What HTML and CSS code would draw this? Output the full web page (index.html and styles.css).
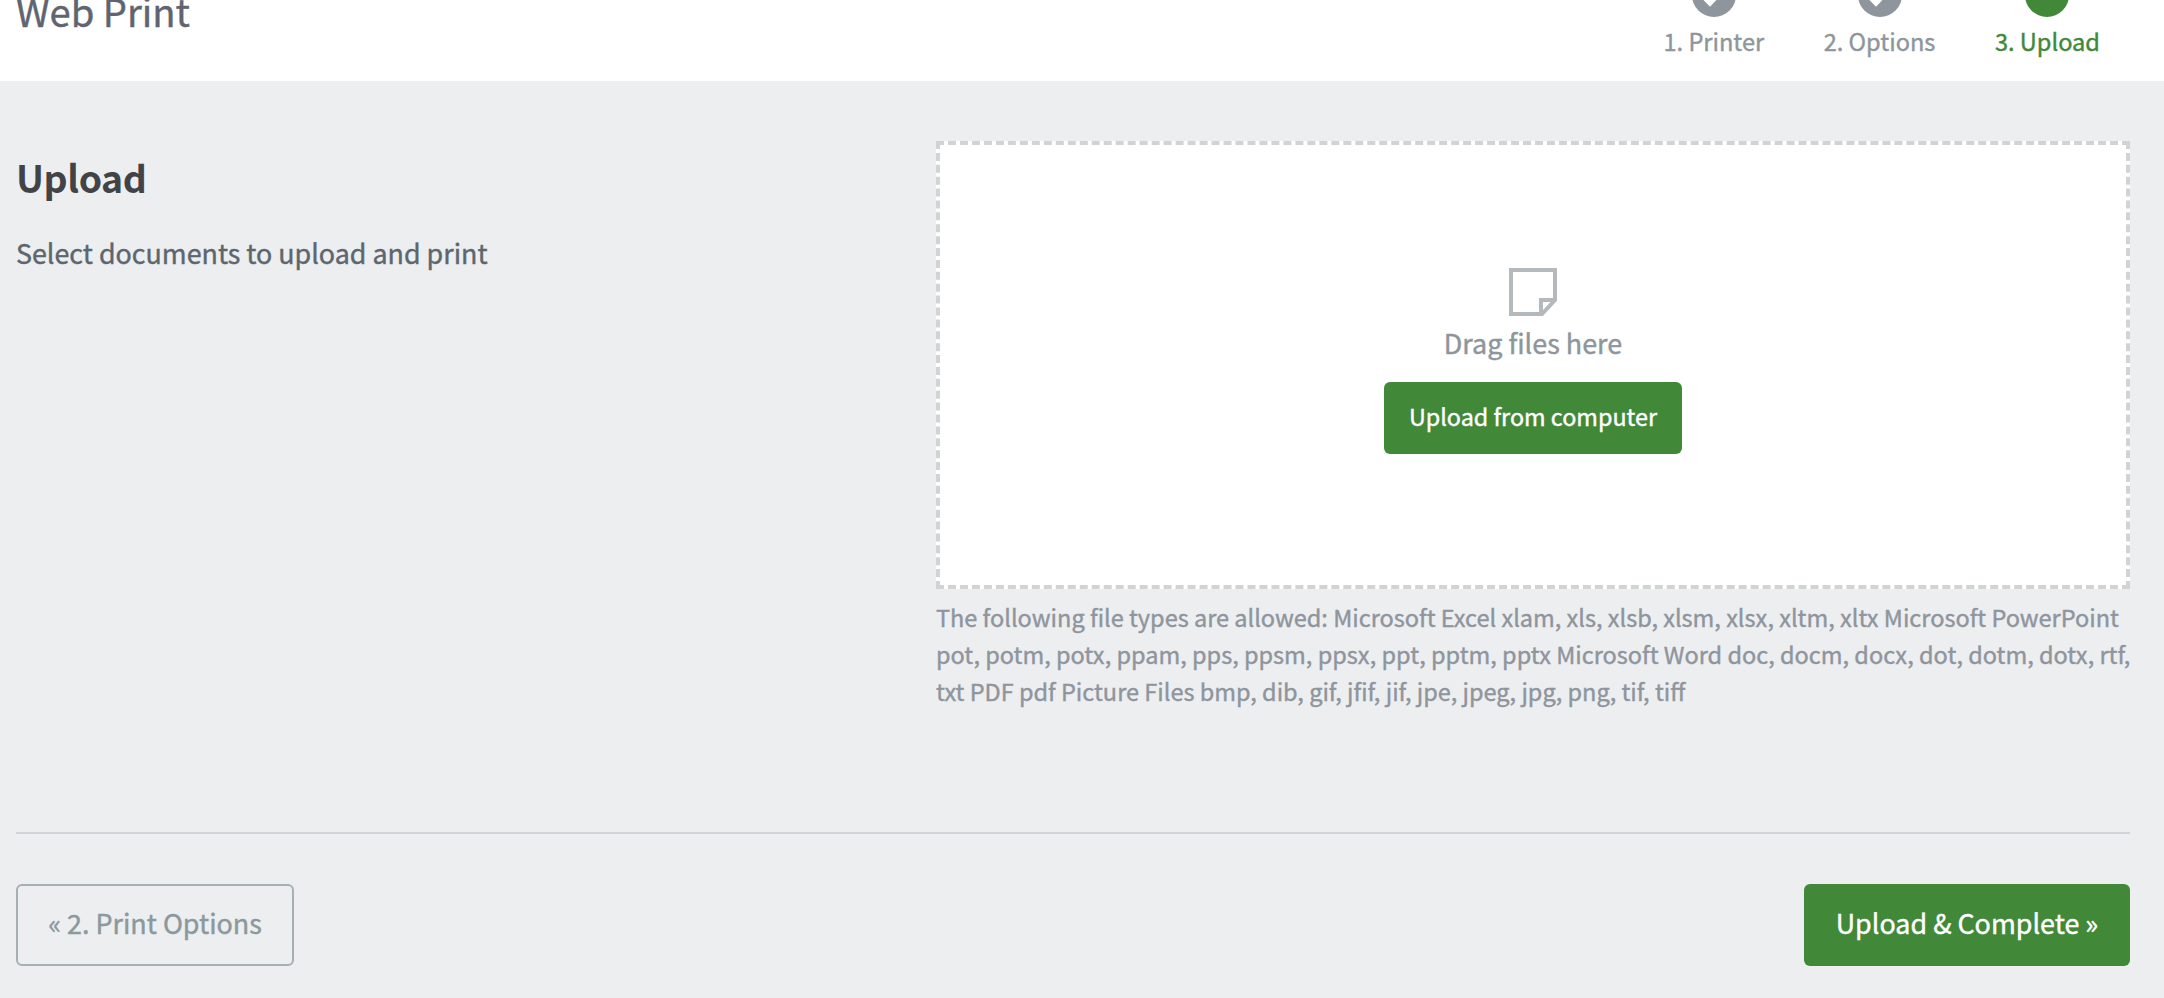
FILE: index.html
```html
<!DOCTYPE html>
<html lang="en">
<head>
<meta charset="utf-8">
<title>Web Print</title>
<link rel="stylesheet" href="styles.css">
</head>
<body>
<header class="header">
  <h1 class="title">Web Print</h1>
  <ol class="steps">
    <li class="step">
      <span class="dot"><svg class="check" viewBox="0 0 44 44"><path d="M11.5 24 18 30.5 32 16"/></svg></span>
      <span>1. Printer</span>
    </li>
    <li class="step">
      <span class="dot"><svg class="check" viewBox="0 0 44 44"><path d="M11.5 24 18 30.5 32 16"/></svg></span>
      <span>2. Options</span>
    </li>
    <li class="step step-current">
      <span class="dot"></span>
      <span>3. Upload</span>
    </li>
  </ol>
</header>
<main class="main">
  <section class="content">
    <div class="intro">
      <h2 class="heading">Upload</h2>
      <p class="lead">Select documents to upload and print</p>
    </div>
    <div class="upload">
      <div class="dropzone">
        <svg class="file-icon" viewBox="0 0 48 48"><path d="M2 2H46V32L33 46H2Z"/><path d="M32 46V32H46"/></svg>
        <p class="hint">Drag files here</p>
        <button class="btn btn-small">Upload from computer</button>
      </div>
      <p class="types">The following file types are allowed: Microsoft Excel xlam, xls, xlsb, xlsm, xlsx, xltm, xltx Microsoft PowerPoint pot, potm, potx, ppam, pps, ppsm, ppsx, ppt, pptm, pptx Microsoft Word doc, docm, docx, dot, dotm, dotx, rtf, txt PDF pdf Picture Files bmp, dib, gif, jfif, jif, jpe, jpeg, jpg, png, tif, tiff</p>
    </div>
  </section>
  <footer class="actions">
    <button class="btn btn-back">« 2. Print Options</button>
    <button class="btn btn-next">Upload &amp; Complete »</button>
  </footer>
</main>
</body>
</html>
```
FILE: styles.css
```css
* { box-sizing: border-box; }
body {
  margin: 0;
  height: 998px;
  overflow: hidden;
  background: #edeef0;
  color: #5c666d;
  font-family: "Noto Sans CJK SC", "Noto Sans", sans-serif;
  -webkit-text-stroke: 0.4px currentColor;
}
h1, h2, p, ol { margin: 0; padding: 0; }
.header {
  display: flex;
  justify-content: space-between;
  align-items: flex-start;
  height: 81px;
  padding: 0 64px 0 16px;
  overflow: hidden;
  background: #fff;
}
.title {
  margin-top: -9px;
  font-size: 38.2px;
  font-weight: 400;
  line-height: 40px;
  color: #5f6470;
}
.steps {
  display: flex;
  gap: 59.5px;
  margin-top: -27px;
  list-style: none;
}
.step {
  display: flex;
  flex-direction: column;
  align-items: center;
  gap: 6px;
  font-size: 23.6px;
  line-height: 36px;
  color: #8e959d;
}
.step-current { color: #418839; }
.dot {
  width: 44px;
  height: 44px;
  border-radius: 50%;
  background: #8e959d;
}
.step-current .dot { background: #418839; }
.check { display: block; fill: none; stroke: #fff; stroke-width: 4.4; }
.main { padding: 60px 34px 0 16px; }
.content {
  display: grid;
  grid-template-columns: 1fr 1194px;
  height: 691px;
}
.heading {
  margin-top: 11px;
  font-size: 37.4px;
  font-weight: 700;
  line-height: 50px;
  letter-spacing: -0.4px;
  color: #424346;
  -webkit-text-stroke: 0;
}
.lead {
  margin-top: 31px;
  font-size: 26.85px;
  line-height: 40px;
}
.dropzone {
  display: flex;
  flex-direction: column;
  align-items: center;
  height: 448px;
  padding-top: 123px;
  border: 4px dashed #d2d3d4;
  background: #fff;
}
.file-icon {
  width: 48px;
  height: 48px;
  fill: none;
  stroke: #b3b9bd;
  stroke-width: 4;
}
.hint {
  margin: 7px 0 19px;
  font-size: 26.95px;
  line-height: 40px;
  color: #8e959d;
}
.types {
  margin: 10px -4px 0 0;
  font-size: 23.5px;
  line-height: 37px;
  color: #8e959d;
}
.btn {
  border: 0;
  border-radius: 6px;
  background: #418839;
  color: #fff;
  font-family: inherit;
  white-space: nowrap;
  padding: 0;
}
.btn-small { width: 298px; height: 72px; padding-bottom: 4px; font-size: 23.35px; }
.actions {
  display: flex;
  justify-content: space-between;
  padding-top: 50px;
  border-top: 2px solid #d2d3d6;
}
.btn-back, .btn-next { height: 82px; padding-bottom: 6px; font-size: 26.9px; }
.btn-back {
  width: 278px;
  border: 2px solid #a4b0b2;
  background: transparent;
  color: #8a999c;
}
.btn-next { width: 326px; }
```
